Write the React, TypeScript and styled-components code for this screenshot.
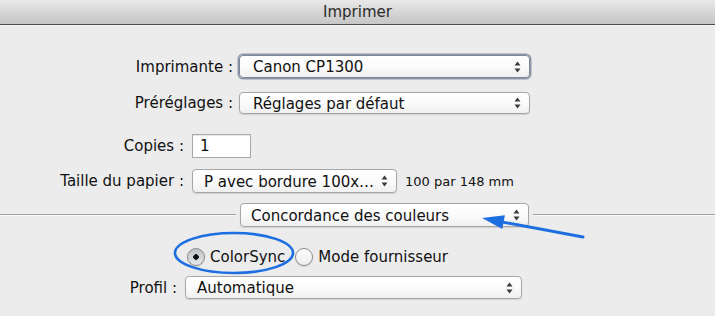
import styled, { createGlobalStyle } from "styled-components";

const GlobalStyle = createGlobalStyle`
 html, body {
  margin: 0;
  padding: 0;
  background: #ececec;
 }
 body {
  font-family: "DejaVu Sans", "Lucida Grande", sans-serif;
  color: #111;
 }
`;

interface SelectProps {
 value: string;
 width: number;
 height?: number;
 focused?: boolean;
 padLeft?: number;
}

const PopUp = ({ value, width, height = 23, focused, padLeft = 12 }: SelectProps) => (
 <StyledPopUp $width={width} $height={height} $focused={focused} $padLeft={padLeft}>
  <span>{value}</span>
  <Arrows>
   <svg width="7" height="12" viewBox="0 0 7 12">
    <path d="M3.5 0.5 L6.5 4.5 L0.5 4.5 Z" fill="#3a3a3a" />
    <path d="M3.5 11.5 L6.5 7.5 L0.5 7.5 Z" fill="#3a3a3a" />
   </svg>
  </Arrows>
 </StyledPopUp>
);

const Radio = ({ checked, label }: { checked?: boolean; label: string }) => (
 <RadioItem>
  <RadioDot $checked={checked} />
  <span>{label}</span>
 </RadioItem>
);

export default function App() {
 return (
  <>
   <GlobalStyle />
   <Window>
    <TitleBar>Imprimer</TitleBar>

    <PrinterGroup>
     <Label>Imprimante :</Label>
     <PopUp value="Canon CP1300" width={291} focused padLeft={13} />
     <Label>Préréglages :</Label>
     <PopUp value="Réglages par défaut" width={291} height={22} padLeft={13} />
    </PrinterGroup>

    <PaperGroup>
     <Label>Copies :</Label>
     <CopiesField>1</CopiesField>
     <Label>Taille du papier :</Label>
     <Inline>
      <PopUp value="P avec bordure 100x…" width={205} height={24} padLeft={11} />
      <SmallText>100 par 148 mm</SmallText>
     </Inline>
    </PaperGroup>

    <Separator>
     <Rule $width={236} />
     <PopUp value="Concordance des couleurs" width={289} height={24} padLeft={10} />
     <Rule />
    </Separator>

    <RadioRow>
     <Radio checked label="ColorSync" />
     <Radio label="Mode fournisseur" />
    </RadioRow>

    <ProfileGroup>
     <Label>Profil :</Label>
     <PopUp value="Automatique" width={337} padLeft={11} />
    </ProfileGroup>

    <Annotation width="715" height="316" viewBox="0 0 715 316">
     <ellipse cx="234" cy="253" rx="59" ry="20" fill="none" stroke="#1d6ee0" strokeWidth="2.6" />
     <line x1="583" y1="237" x2="500" y2="221.6" stroke="#1d6ee0" strokeWidth="3" strokeLinecap="round" />
     <path d="M482 218 L502.3 229 L504.9 215.2 Z" fill="#1d6ee0" />
    </Annotation>
   </Window>
  </>
 );
}

const Window = styled.div`
 position: relative;
 width: 715px;
 height: 316px;
 overflow: hidden;
 background: #ececec;
 font-size: 15px;
`;

const TitleBar = styled.div`
 height: 24px;
 line-height: 25px;
 text-align: center;
 font-size: 15px;
 color: #2a2a2a;
 background: linear-gradient(#e9e9e9, #d2d2d2 60%, #c6c6c6);
 border-bottom: 1px solid #4a4a4a;
 box-shadow: 0 1px 0 #f6f6f6;
`;

const PrinterGroup = styled.div`
 display: grid;
 grid-template-columns: 233px auto;
 column-gap: 6px;
 row-gap: 14px;
 align-items: center;
 justify-content: start;
 margin-top: 30px;
`;

const PaperGroup = styled.div`
 display: grid;
 grid-template-columns: 184px auto;
 column-gap: 8px;
 row-gap: 11px;
 align-items: center;
 justify-content: start;
 margin-top: 20px;
`;

const ProfileGroup = styled.div`
 display: grid;
 grid-template-columns: 177px auto;
 column-gap: 8px;
 align-items: center;
 justify-content: start;
 margin-top: 10px;
`;

const Label = styled.div`
 text-align: right;
 white-space: nowrap;
`;

const StyledPopUp = styled.div<{ $width: number; $height: number; $focused?: boolean; $padLeft: number }>`
 box-sizing: border-box;
 width: ${(p) => p.$width}px;
 height: ${(p) => p.$height}px;
 display: flex;
 align-items: center;
 justify-content: space-between;
 padding: 0 8px 0 ${(p) => p.$padLeft}px;
 background: linear-gradient(#ffffff, #fbfbfb 50%, #f0f0f0);
 border: 1px solid ${(p) => (p.$focused ? "#7d8896" : "#a6a6a6")};
 border-radius: 4px;
 box-shadow: ${(p) =>
  p.$focused ? "0 0 0 1.5px rgba(110, 125, 145, 0.75)" : "0 1px 1px rgba(0, 0, 0, 0.12)"};
 white-space: nowrap;
 span {
  padding-top: 1px;
 }
`;

const Arrows = styled.div`
 display: flex;
 align-items: center;
`;

const CopiesField = styled.div`
 box-sizing: border-box;
 width: 59px;
 height: 24px;
 padding: 2px 0 0 7px;
 background: #fff;
 border: 1px solid #a9a9a9;
 box-shadow: inset 0 1px 1px rgba(0, 0, 0, 0.1);
`;

const Inline = styled.div`
 display: flex;
 align-items: center;
 gap: 8px;
`;

const SmallText = styled.span`
 font-size: 13px;
`;

const Separator = styled.div`
 display: flex;
 align-items: center;
 gap: 4px;
 margin-top: 10px;
`;

const Rule = styled.div<{ $width?: number }>`
 ${(p) => (p.$width ? `width: ${p.$width}px;` : "flex: 1;")}
 height: 0;
 border-top: 1px solid #a2a2a2;
 border-bottom: 1px solid #f8f8f8;
`;

const RadioRow = styled.div`
 display: flex;
 align-items: center;
 gap: 10px;
 padding-left: 187px;
 margin-top: 21px;
`;

const RadioItem = styled.label`
 display: flex;
 align-items: center;
 gap: 5px;
`;

const RadioDot = styled.span<{ $checked?: boolean }>`
 box-sizing: border-box;
 width: 18px;
 height: 18px;
 border-radius: 50%;
 border: 1px solid #8c8c8c;
 background: ${(p) =>
  p.$checked
   ? "radial-gradient(circle, #111 0 2.5px, transparent 3px), linear-gradient(#bfc3c8, #e6e8ea)"
   : "linear-gradient(#fefefe, #ececec)"};
 box-shadow: 0 1px 1px rgba(0, 0, 0, 0.12);
`;

const Annotation = styled.svg`
 position: absolute;
 left: 0;
 top: 0;
 pointer-events: none;
`;
